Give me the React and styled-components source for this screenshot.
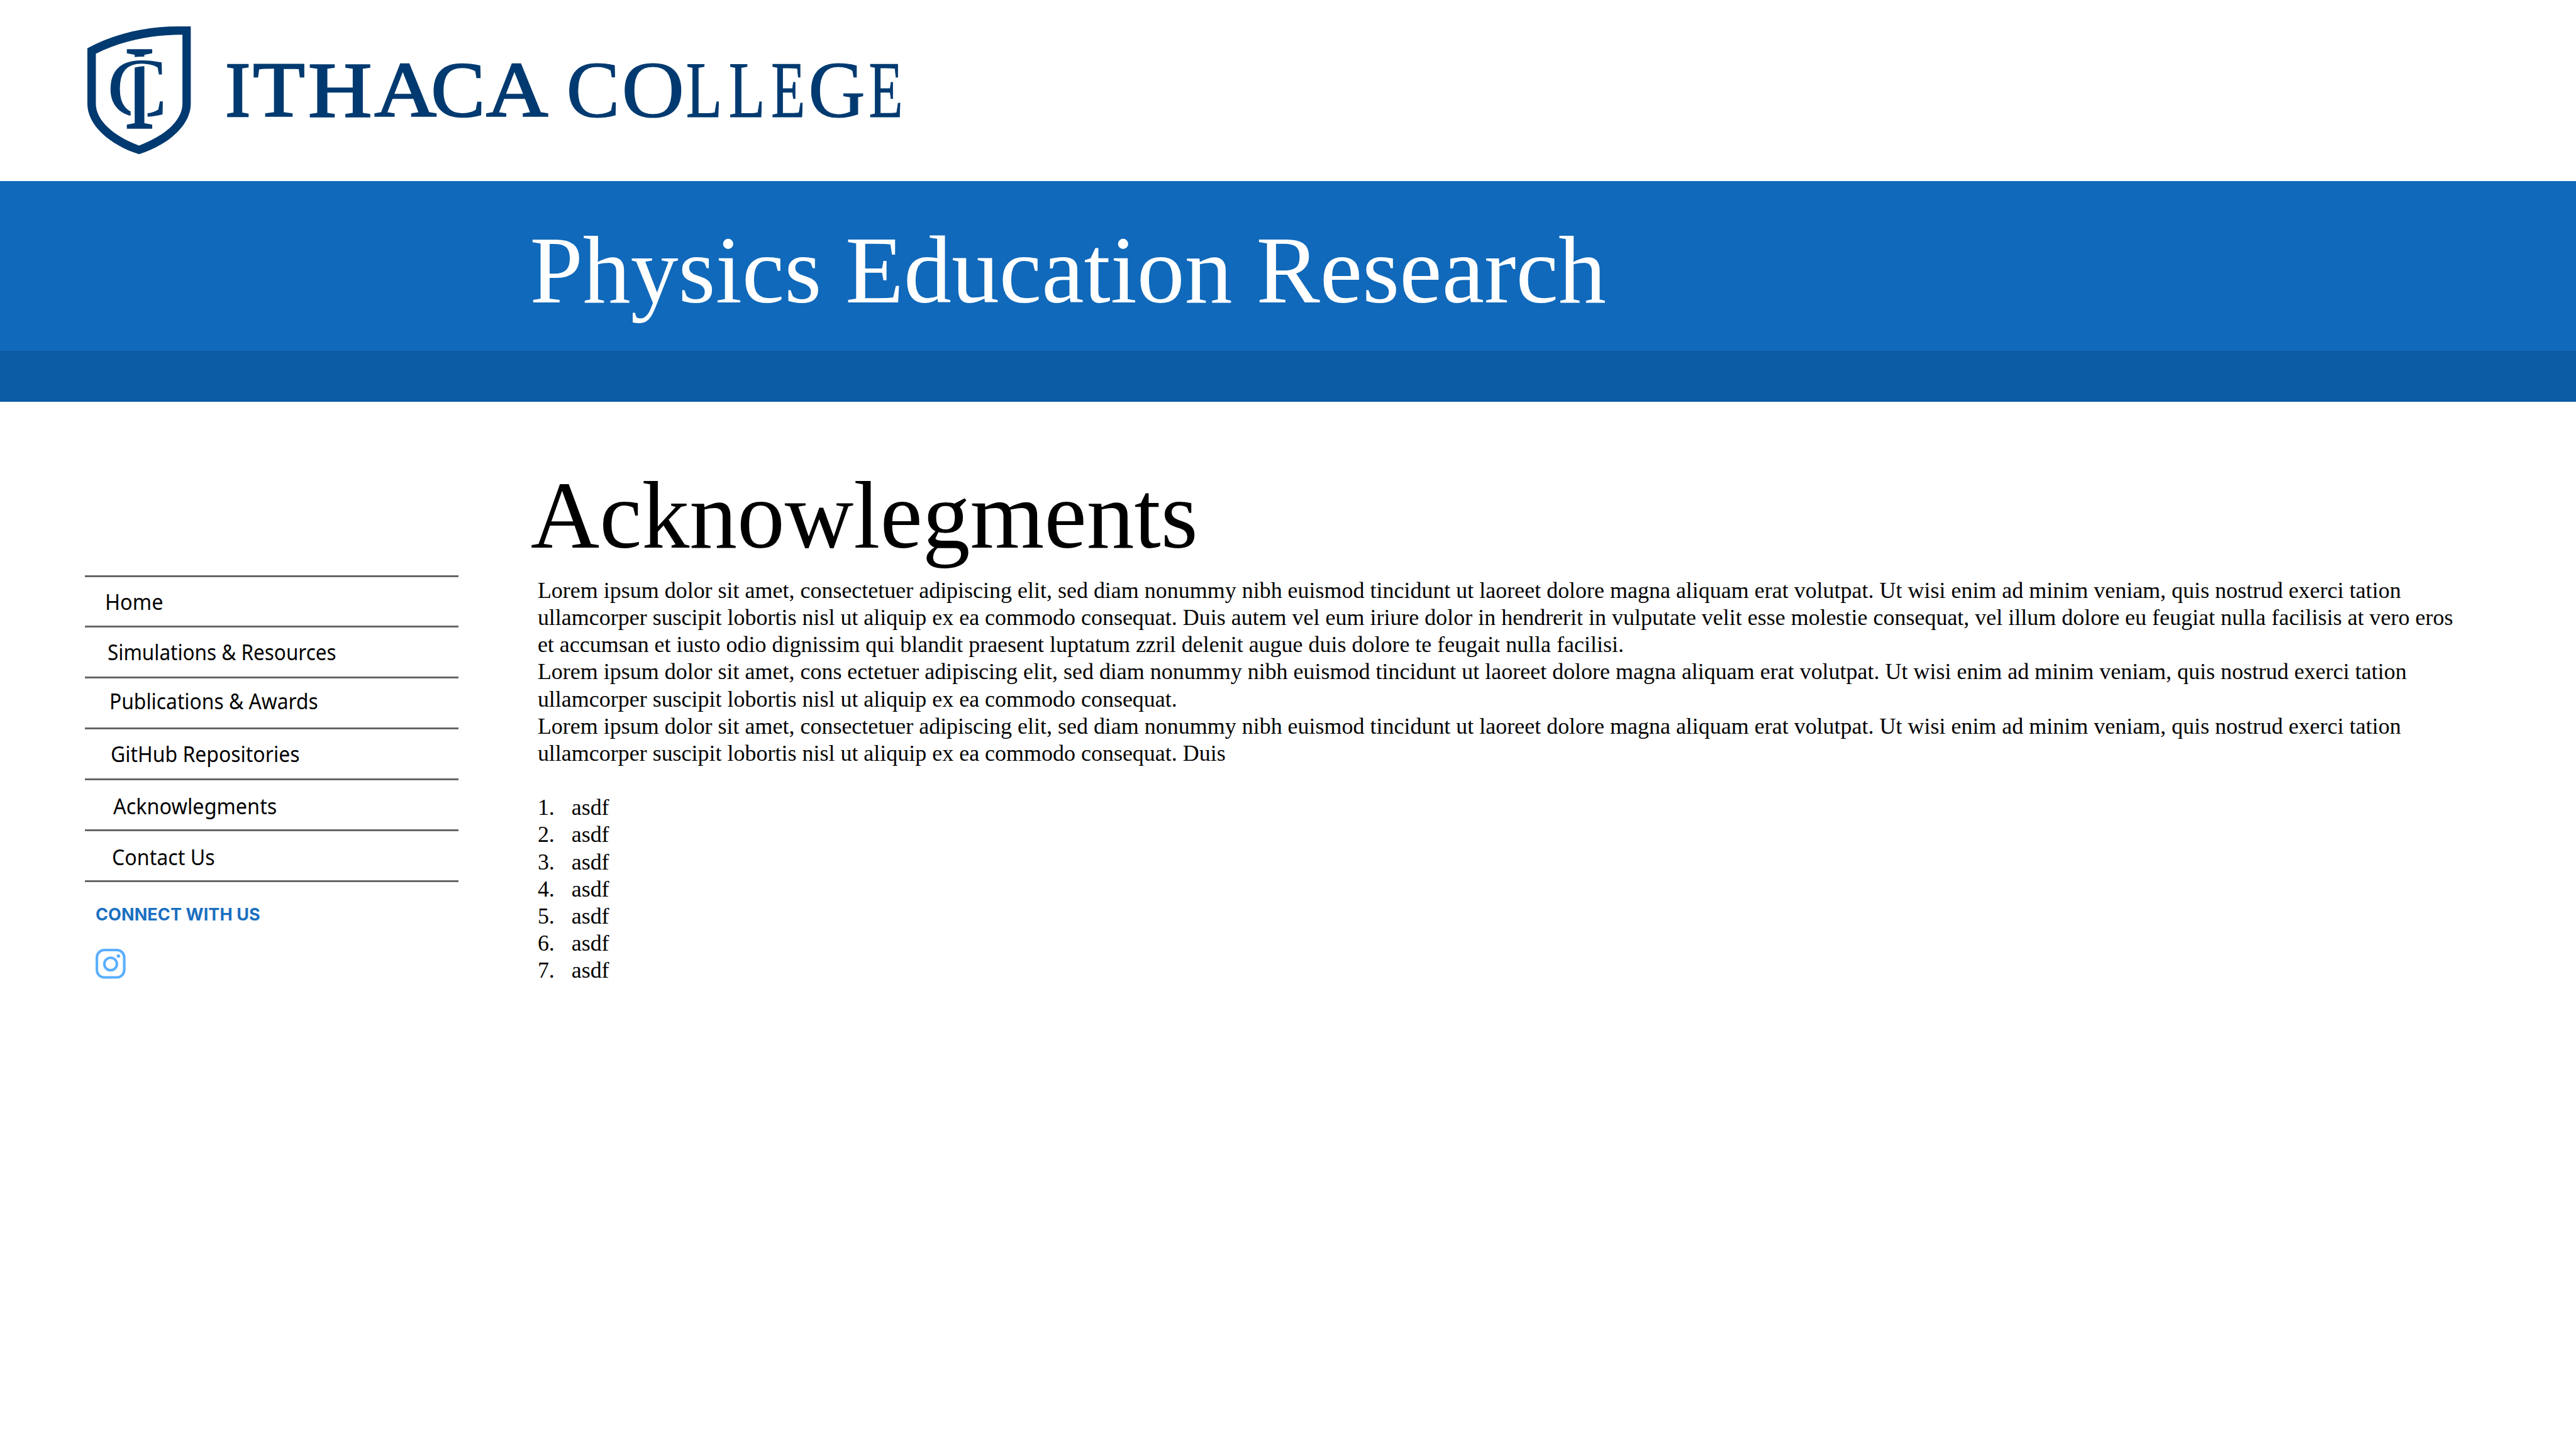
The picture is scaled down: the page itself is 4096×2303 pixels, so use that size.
import React from "react";
import styled, { createGlobalStyle } from "styled-components";

const GlobalStyle = createGlobalStyle`
  html, body { margin: 0; padding: 0; background: #fff; }
  #root { width: 4096px; height: 2303px; overflow: hidden; }
`;

const navy = "#003a70";
const rule = "#666";
const serif = `"Liberation Serif", "Times New Roman", serif`;
const sans = `"Noto Sans", "Open Sans", sans-serif`;

const Page = styled.div`
  display: flex;
  flex-direction: column;
  width: 4096px;
  height: 2303px;
  overflow: hidden;
  background: #fff;
  color: #000;
  font-family: ${serif};
`;

const Header = styled.header`
  display: flex;
  flex-shrink: 0;
  align-items: flex-start;
  height: 288px;
`;

const Logo = styled.svg`
  display: block;
  width: 1499.26px;
  height: 288px;
`;

const Banner = styled.div`
  box-sizing: border-box;
  flex-shrink: 0;
  height: 270px;
  padding: 58px 0 0 842.4px;
  background: #1069ba;
`;

const BannerTitle = styled.h1`
  margin: 0;
  width: max-content;
  font-size: 151.8px;
  font-weight: 400;
  line-height: 168px;
  white-space: nowrap;
  color: #fff;
`;

const SubBar = styled.div`
  flex-shrink: 0;
  height: 81px;
  background: #0c5ba5;
`;

const Main = styled.main`
  display: grid;
  grid-template-columns: 841.7px 1fr;
  align-items: start;
`;

const Sidebar = styled.aside`
  box-sizing: border-box;
  width: 729px;
  padding: 275.5px 0 0 134.8px;
`;

const Nav = styled.nav`
  display: flex;
  flex-direction: column;
  border-bottom: 3px solid ${rule};
`;

const NavItem = styled.a`
  box-sizing: border-box;
  display: flex;
  height: 80.96px;
  border-top: 3px solid ${rule};
  padding: ${(p) => p.$top}px 0 0 ${(p) => p.$left}px;
  color: #000;
`;

const NavLabel = styled.span`
  height: 47px;
  font-family: ${sans};
  font-size: 34.6px;
  line-height: 47px;
  white-space: nowrap;
  transform: scaleX(${(p) => p.$stretch});
  transform-origin: 0 0;
`;

const Connect = styled.div`
  display: flex;
  flex-direction: column;
  align-items: flex-start;
  padding: 34.3px 0 0 17.2px;
`;

const ConnectTitle = styled.h2`
  margin: 0;
  font-family: Inter, "Liberation Sans", sans-serif;
  font-size: 27px;
  font-weight: 700;
  line-height: 33px;
  letter-spacing: 0.1px;
  white-space: nowrap;
  color: #1a6fc0;
`;

const Instagram = styled.svg`
  display: block;
  width: 47.6px;
  height: 47.6px;
  margin: 38.6px 0 0 0.4px;
`;

const Content = styled.article`
  padding-top: 97px;
`;

const Heading = styled.h2`
  margin: 0;
  width: max-content;
  padding-left: 2px;
  font-size: 151.6px;
  font-weight: 400;
  line-height: 168px;
  white-space: nowrap;
`;

const Body = styled.div`
  padding: 13.8px 0 0 13.2px;
  font-size: 35.98px;
  line-height: 43.18px;
`;

const Paragraph = styled.p`
  margin: 0;
`;

const Line = styled.span`
  display: block;
  width: max-content;
  white-space: nowrap;
`;

const List = styled.ol`
  margin: 43.18px 0 0;
  padding: 0;
  list-style: none;
`;

const ListItem = styled.li`
  display: grid;
  grid-template-columns: 53.8px auto;
`;

const ListNumber = styled.span``;
const ListText = styled.span``;

// Advance width and left/right ink edges of each capital, in thousandths of an em.
const glyphs = {
  I: [333, 18, 315],
  T: [611, 17, 593],
  H: [722, 19, 702],
  A: [722, 15, 706],
  C: [667, 28, 633],
  O: [722, 34, 688],
  L: [611, 12, 598],
  E: [611, 12, 597],
  G: [722, 32, 709],
};

// Letter, left edge, right edge in logo units.
const ithaca = [
  ["I", 478.8, 530.2],
  ["T", 537.9, 645],
  ["H", 655.7, 787],
  ["A", 795.3, 924.2],
  ["C", 917.5, 1024.6],
  ["A", 1032.4, 1161.3],
];
const college = [
  ["C", 1205.4, 1310],
  ["O", 1323.8, 1446.2],
  ["L", 1455.9, 1530.9],
  ["L", 1546.7, 1622.2],
  ["E", 1636.5, 1706.9],
  ["G", 1719.2, 1834],
  ["E", 1843.7, 1914.1],
];

function Word({ letters, size, stroke, y }) {
  return (
    <text y={y} fontFamily="Liberation Serif, serif" fontSize={size} fill={navy} stroke={navy} strokeWidth={stroke}>
      {letters.map(([ch, left, right], i) => {
        const [adv, l, r] = glyphs[ch];
        const k = (right - left - stroke) / (r - l);
        return (
          <tspan key={i} x={left + stroke / 2 - l * k} textLength={adv * k} lengthAdjust="spacingAndGlyphs">
            {ch}
          </tspan>
        );
      })}
    </text>
  );
}

function CollegeLogo() {
  return (
    <Logo viewBox="0 0 2000 384.2" preserveAspectRatio="xMinYMin meet">
      <defs>
        <clipPath id="stem">
          <path d="M300 200H520V270H440Q405 270 372 273H300ZM300 342H372Q405 331 438 331H520V760H300Z" />
        </clipPath>
        <clipPath id="bowl">
          <path d="M200 270H600V700H459V450H351V700H200Z" />
        </clipPath>
      </defs>
      <g transform="translate(160 30) scale(.33333)" fill={navy}>
        <path
          fillRule="evenodd"
          d="M76 217C245 128 440 78 655 78H734V570C734 705 595 830 405 892C215 830 76 705 76 570ZM130 252V570C130 675 240 775 405 836C570 775 681 675 681 570V131C480 131 295 170 130 252Z"
        />
        <g fontFamily="Liberation Serif, serif">
          <g clipPath="url(#stem)">
            <text transform="translate(308 727) scale(.78 1)" fontSize="764" stroke={navy} strokeWidth="7">I</text>
          </g>
          <g clipPath="url(#bowl)">
            <text transform="translate(199 652) scale(1.09 1)" fontSize="535">C</text>
          </g>
        </g>
      </g>
      <Word letters={ithaca} size={166.5} stroke={3.4} y={247.2} />
      <Word letters={college} size={169.5} stroke={1.5} y={248.2} />
    </Logo>
  );
}

// Label, left inset, top inset, horizontal scale.
const navItems = [
  ["Home", 32.4, 15.8, 0.94],
  ["Simulations & Resources", 35.8, 14.2, 0.91],
  ["Publications & Awards", 39.4, 12, 0.919],
  ["GitHub Repositories", 41.2, 14.2, 0.924],
  ["Acknowlegments", 45.4, 16.5, 0.937],
  ["Contact Us", 43.7, 16.6, 0.93],
];

const paragraphs = [
  [
    "Lorem ipsum dolor sit amet, consectetuer adipiscing elit, sed diam nonummy nibh euismod tincidunt ut laoreet dolore magna aliquam erat volutpat. Ut wisi enim ad minim veniam, quis nostrud exerci tation",
    "ullamcorper suscipit lobortis nisl ut aliquip ex ea commodo consequat. Duis autem vel eum iriure dolor in hendrerit in vulputate velit esse molestie consequat, vel illum dolore eu feugiat nulla facilisis at vero eros",
    "et accumsan et iusto odio dignissim qui blandit praesent luptatum zzril delenit augue duis dolore te feugait nulla facilisi.",
  ],
  [
    "Lorem ipsum dolor sit amet, cons ectetuer adipiscing elit, sed diam nonummy nibh euismod tincidunt ut laoreet dolore magna aliquam erat volutpat. Ut wisi enim ad minim veniam, quis nostrud exerci tation",
    "ullamcorper suscipit lobortis nisl ut aliquip ex ea commodo consequat.",
  ],
  [
    "Lorem ipsum dolor sit amet, consectetuer adipiscing elit, sed diam nonummy nibh euismod tincidunt ut laoreet dolore magna aliquam erat volutpat. Ut wisi enim ad minim veniam, quis nostrud exerci tation",
    "ullamcorper suscipit lobortis nisl ut aliquip ex ea commodo consequat. Duis",
  ],
];

const listEntries = ["asdf", "asdf", "asdf", "asdf", "asdf", "asdf", "asdf"];

export default function App() {
  return (
    <Page>
      <GlobalStyle />
      <Header>
        <CollegeLogo />
      </Header>
      <Banner>
        <BannerTitle>Physics Education Research</BannerTitle>
      </Banner>
      <SubBar />
      <Main>
        <Sidebar>
          <Nav>
            {navItems.map(([label, left, top, stretch]) => (
              <NavItem key={label} $left={left} $top={top}>
                <NavLabel $stretch={stretch}>{label}</NavLabel>
              </NavItem>
            ))}
          </Nav>
          <Connect>
            <ConnectTitle>CONNECT WITH US</ConnectTitle>
            <Instagram viewBox="0 0 63 63" fill="none" stroke="#5aafff" strokeWidth="5.4">
              <rect x="2.7" y="2.7" width="57.6" height="57.6" rx="15.5" />
              <circle cx="31.6" cy="32" r="13.2" />
              <circle cx="48" cy="15.2" r="3.7" fill="#5aafff" stroke="none" />
            </Instagram>
          </Connect>
        </Sidebar>
        <Content>
          <Heading>Acknowlegments</Heading>
          <Body>
            {paragraphs.map((lines, i) => (
              <Paragraph key={i}>
                {lines.map((line) => (
                  <Line key={line}>{line}</Line>
                ))}
              </Paragraph>
            ))}
            <List>
              {listEntries.map((entry, i) => (
                <ListItem key={i}>
                  <ListNumber>{i + 1}.</ListNumber>
                  <ListText>{entry}</ListText>
                </ListItem>
              ))}
            </List>
          </Body>
        </Content>
      </Main>
    </Page>
  );
}
